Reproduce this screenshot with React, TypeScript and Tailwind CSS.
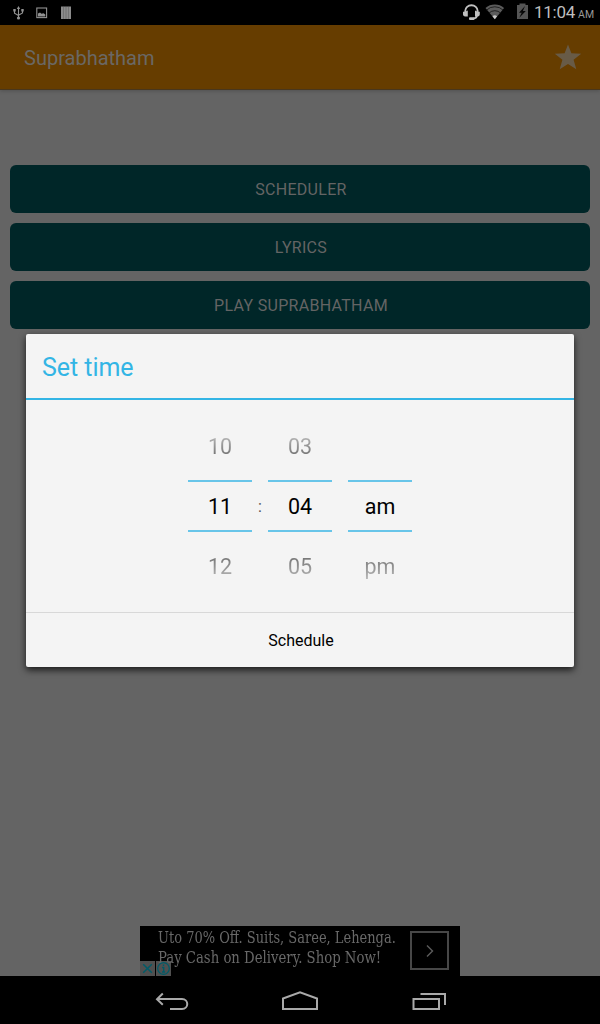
import React from "react";

function StatusBar() {
  return (
    <header className="flex h-[25px] shrink-0 items-center bg-black">
      <svg width="80" height="25" viewBox="0 0 80 25" className="shrink-0" fill="none">
        <g stroke="#929292" strokeWidth="1.1">
          <path d="M18.5 7v11M14.5 10v3.2l4 2.3M22.5 10v3l-4 2.2" />
        </g>
        <g fill="#929292">
          <path d="M16.8 9l1.700-3 1.700 3zM13.300 9h2.400v2.400h-2.400zM21.300 9h2.400v2.400h-2.400z" />
          <circle cx="18.5" cy="18" r="1.6" />
        </g>
        <rect x="36.800" y="8" width="9.800" height="9.600" stroke="#929292" strokeWidth="1.1" />
        <path d="M38 16.500v-3l2-1 1.500 1.300 2-.6 1.800 1.300v2z" fill="#929292" />
        <path d="M61 6.500h10V19H61z" fill="#8b8b8b" />
        <path d="M63.500 7v12M66 7v12M68.500 7v12" stroke="#686868" strokeWidth="0.7" />
      </svg>
      <svg width="70" height="25" viewBox="460 0 70 25" className="ml-auto shrink-0" fill="none">
        <path d="M465.300 13v-2.200a6.150 5.600 0 0 1 12.300 0V13M477 15c0 2.500-1.500 3.400-4 3.600" stroke="#c0c0c0" strokeWidth="1.900" />
        <path d="M463 11.800h2.200L467.800 10.500v6h-2.600c-1.500 0-2.200-1-2.200-2.500zM479.800 11.800h-2.200l-2.600-1.300v6h2.600c1.500 0 2.200-1 2.200-2.500z" fill="#c0c0c0" />
        <rect x="469" y="17.200" width="5.500" height="2.700" rx="1" fill="#c0c0c0" />
        <path d="M485.500 8a14.500 14.500 0 0 1 18.600 0L494.800 19.200z" fill="#5c5c5c" />
        <path d="M486.500 10.100a12 12 0 0 1 16.600 0M489 13a8.500 8.500 0 0 1 11.600 0" stroke="#111" strokeWidth="0.8" />
        <path d="M492.500 16.200a3.500 3.500 0 0 1 4.600 0l-2.300 3z" fill="#c8c8c8" />
        <path d="M517 5h2.500V3.500h6V5h2.500v14h-11z" fill="#555555" />
        <path d="M525 6l-6 6.700h2.700l-2.400 5 6.500-6.700h-2.900z" fill="#080808" />
      </svg>
      <div className="flex w-[70px] items-baseline whitespace-nowrap pl-[4px] text-[#bebebe]">
        <span className="text-[17px] leading-[25px] tracking-[-0.250px]">11:04</span>
        <span className="ml-[3px] text-[10.500px] text-[#999]">AM</span>
      </div>
    </header>
  );
}

function AppBar() {
  return (
    <div className="z-0 flex h-[65px] shrink-0 items-center justify-between border-b border-[#49371d] bg-[#663d00] pl-6 pr-[18px] shadow-[0_1px_4px_rgba(0,0,0,0.2)]">
      <h1 className="pt-[2px] text-[20px] leading-6 text-[#6a6865]">Suprabhatham</h1>
      <svg width="28" height="28" viewBox="0 0 28 28">
        <path d="M14 1.500l3.400 8.800 9.800.4-7.600 6 2.700 9.600L14 20.900l-8.300 5.400 2.700-9.600-7.600-6 9.800-.4z" fill="#685b47" />
      </svg>
    </div>
  );
}

function MenuButton({ label }: { label: string }) {
  return (
    <button className="h-12 rounded-md bg-[#002628] pl-[2px] pt-px text-[16px] leading-6 tracking-[0.300px] text-[#646464]">
      {label}
    </button>
  );
}

function Advert() {
  return (
    <div className="relative flex h-[50px] w-[320px] shrink-0 self-center overflow-hidden bg-black">
      <div className="w-[270px] whitespace-nowrap pl-[18px] pt-[2px] font-['DejaVu_Serif_Condensed','DejaVu_Serif',serif] text-[16px] leading-5 text-[#686868]">
        <p className="w-max origin-left scale-x-[0.903]">Uto 70% Off. Suits, Saree, Lehenga.</p>
        <p className="w-max origin-left scale-x-[0.920]">Pay Cash on Delivery. Shop Now!</p>
      </div>
      <div className="mt-[5px] flex h-[39px] w-[39px] items-center justify-center border-2 border-[#474747]">
        <svg width="10" height="14" viewBox="0 0 10 14" fill="none">
          <path d="M2 1.500L7.500 7 2 12.500" stroke="#5c5c5c" strokeWidth="1.400" />
        </svg>
      </div>
      <div className="absolute bottom-0 left-0 flex gap-px">
        <span className="flex h-[15px] w-[15px] items-center justify-center bg-[#646464]/80">
          <svg width="15" height="15" viewBox="0 0 15 15"><path d="M3.200 3.200l8.600 8.600M11.800 3.200l-8.600 8.600" stroke="#005b68" strokeWidth="1.500" /></svg>
        </span>
        <span className="flex h-[15px] w-[15px] items-center justify-center bg-[#646464]/80">
          <svg width="15" height="15" viewBox="0 0 15 15" fill="none" stroke="#005b68"><circle cx="7.500" cy="7.500" r="5.800" strokeWidth="1.300" /><path d="M7.500 3.500v1.600M6 6.500h1.700v4.500M6 11h3.200" strokeWidth="1.400" /></svg>
        </span>
      </div>
    </div>
  );
}

function NavigationBar() {
  return (
    <nav className="flex h-12 shrink-0 items-center justify-center gap-[88px] bg-black">
      <svg width="42" height="48" viewBox="149 976 42 48" fill="none" stroke="#a9a9a9" strokeWidth="2">
        <path d="M157.500 999H182c7 0 7 10 0 10h-12M162.800 993.500L157 999.200l5.800 5.600" />
      </svg>
      <svg width="42" height="48" viewBox="279 976 42 48" fill="none" stroke="#a9a9a9" strokeWidth="2">
        <path d="M283 1009v-10.500l17-6.300 17 6.300V1009z" />
      </svg>
      <svg width="42" height="48" viewBox="409 976 42 48" fill="none" stroke="#a9a9a9" strokeWidth="2">
        <path d="M413.500 999h25.500v10h-25.500zM420.500 994h24.500v11" />
      </svg>
    </nav>
  );
}

function PickerColumn({ values }: { values: string[] }) {
  return (
    <div className="grid w-16 grid-rows-[66px_52px_66px] text-center text-[21.500px] text-black">
      <div className="bg-gradient-to-b from-[#b4b4b4] from-[35%] to-[#707070] to-[65%] bg-clip-text leading-[66px] text-transparent">{values[0]}</div>
      <div className="border-y-2 border-[#68c5e9] leading-[50px]">{values[1]}</div>
      <div className="bg-gradient-to-b from-[#707070] from-[35%] to-[#c0c0c0] to-[75%] bg-clip-text leading-[69px] text-transparent">{values[2]}</div>
    </div>
  );
}

function TimeDialog() {
  return (
    <section role="dialog" className="absolute left-[26px] top-[334px] flex h-[333px] w-[548px] flex-col rounded-[2px] bg-[#f4f4f4] shadow-[0_3px_7px_rgba(0,0,0,0.75)]">
      <h2 className="h-[66px] border-b-2 border-[#33b5e5] pl-4 pt-px text-[25px] leading-[66px] tracking-[-0.050px] text-[#33b5e5]">Set time</h2>
      <div className="flex flex-1 items-start justify-center pt-[14px]">
        <PickerColumn values={["10", "11", "12"]} />
        <span className="w-4 pt-[68px] text-center text-[16px] leading-[50px] text-[#555]">:</span>
        <PickerColumn values={["03", "04", "05"]} />
        <div className="ml-4"><PickerColumn values={["", "am", "pm"]} /></div>
      </div>
      <button className="h-[55px] border-t border-[#d8d8d8] pl-[2px] pt-[2px] text-[16px] leading-[52px] text-black">Schedule</button>
    </section>
  );
}

export default function App() {
  return (
    <main className="relative flex h-[1024px] w-[600px] flex-col overflow-hidden bg-[#646464] font-[Roboto,sans-serif]">
      <StatusBar />
      <AppBar />
      <div className="flex flex-1 flex-col gap-[10px] px-[10px] pt-[75px]">
        <MenuButton label="SCHEDULER" />
        <MenuButton label="LYRICS" />
        <MenuButton label="PLAY SUPRABHATHAM" />
      </div>
      <Advert />
      <NavigationBar />
      <TimeDialog />
    </main>
  );
}
